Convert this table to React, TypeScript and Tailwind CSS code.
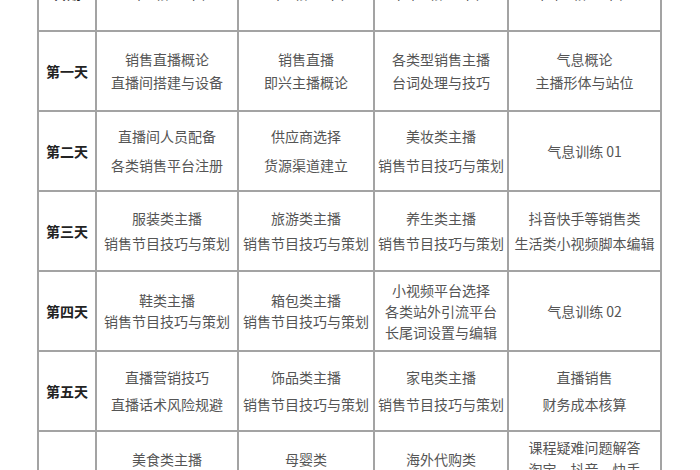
import React from "react";

type Row = { day: string; lh: string; cells: string[][] };

const rows: Row[] = [
  {
    day: "第一天",
    lh: "leading-[23px]",
    cells: [
      ["销售直播概论", "直播间搭建与设备"],
      ["销售直播", "即兴主播概论"],
      ["各类型销售主播", "台词处理与技巧"],
      ["气息概论", "主播形体与站位"],
    ],
  },
  {
    day: "第二天",
    lh: "leading-[29px]",
    cells: [
      ["直播间人员配备", "各类销售平台注册"],
      ["供应商选择", "货源渠道建立"],
      ["美妆类主播", "销售节目技巧与策划"],
      ["气息训练 01"],
    ],
  },
  {
    day: "第三天",
    lh: "leading-[25px]",
    cells: [
      ["服装类主播", "销售节目技巧与策划"],
      ["旅游类主播", "销售节目技巧与策划"],
      ["养生类主播", "销售节目技巧与策划"],
      ["抖音快手等销售类", "生活类小视频脚本编辑"],
    ],
  },
  {
    day: "第四天",
    lh: "leading-[21px]",
    cells: [
      ["鞋类主播", "销售节目技巧与策划"],
      ["箱包类主播", "销售节目技巧与策划"],
      ["小视频平台选择", "各类站外引流平台", "长尾词设置与编辑"],
      ["气息训练 02"],
    ],
  },
  {
    day: "第五天",
    lh: "leading-[27px]",
    cells: [
      ["直播营销技巧", "直播话术风险规避"],
      ["饰品类主播", "销售节目技巧与策划"],
      ["家电类主播", "销售节目技巧与策划"],
      ["直播销售", "财务成本核算"],
    ],
  },
];

const lastRow: { lines: string[]; pt: string }[] = [
  { lines: ["美食类主播", "销售节目技巧与策划"], pt: "pt-[16px]" },
  { lines: ["母婴类", "销售节目技巧与策划"], pt: "pt-[16px]" },
  { lines: ["海外代购类", "销售节目技巧与策划"], pt: "pt-[16px]" },
  { lines: ["课程疑难问题解答", "淘宝、抖音、快手", "直播实战演练"], pt: "pt-[4px]" },
];

const header = ["日期", "上午（第一节）", "上午（第二节）", "下午（第一节）", "下午（第二节）"];

export default function App() {
  return (
    <div
      className="w-[700px] h-[470px] overflow-hidden bg-white"
      style={{ fontFamily: '"Noto Sans CJK SC", "Noto Sans", sans-serif' }}
    >
      <div className="ml-[37px] mt-[-40px] w-[625px] grid grid-cols-[56px_140px_134px_132px_151px] gap-[2px] p-[2px] bg-[#a3a3a3]">
        {header.map((h, i) => (
          <div
            key={i}
            className={`h-[68px] bg-white flex items-start justify-center pt-[24px] text-[14px] leading-[14px] ${
              i === 0 ? "font-bold text-[#222]" : "text-[#555]"
            }`}
          >
            {h}
          </div>
        ))}
        {rows.map((r, ri) => (
          <React.Fragment key={ri}>
            <div className="h-[78px] bg-white flex items-center justify-center text-[14px] font-bold text-[#222]">
              {r.day}
            </div>
            {r.cells.map((c, ci) => (
              <div
                key={ci}
                className={`h-[78px] bg-white flex flex-col items-center justify-center text-[14px] text-[#555] whitespace-nowrap ${r.lh}`}
              >
                {c.map((t, ti) => (
                  <div key={ti}>{t}</div>
                ))}
              </div>
            ))}
          </React.Fragment>
        ))}
        <div className="h-[90px] bg-white flex items-start justify-center pt-[44px] text-[14px] font-bold text-[#222]">
          第六天
        </div>
        {lastRow.map((c, ci) => (
          <div
            key={ci}
            className={`h-[90px] bg-white flex flex-col items-center justify-start text-[14px] text-[#555] whitespace-nowrap leading-[22px] ${c.pt}`}
          >
            {c.lines.map((t, ti) => (
              <div key={ti}>{t}</div>
            ))}
          </div>
        ))}
      </div>
    </div>
  );
}
